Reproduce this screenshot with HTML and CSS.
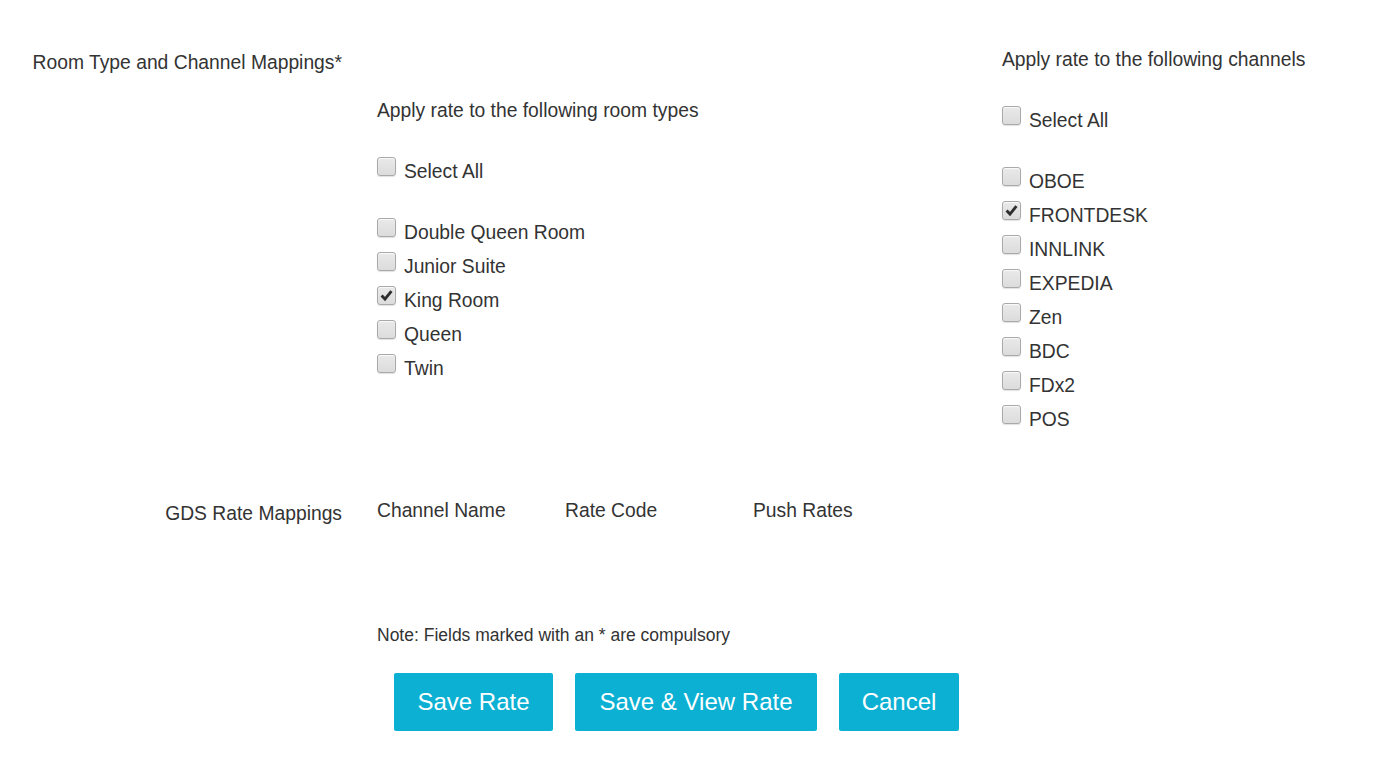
FILE: index.html
```html
<!DOCTYPE html>
<html>
<head>
<meta charset="utf-8">
<link rel="stylesheet" href="styles.css">
</head>
<body>
<div class="page">
  <div class="mapping">
    <div class="label label-top">Room Type and Channel Mappings*</div>
    <div class="col col-rooms">
      <div class="col-title">Apply rate to the following room types</div>
      <div class="check select-all"><span class="box"></span><span>Select All</span></div>
      <div class="list">
        <div class="check"><span class="box"></span><span>Double Queen Room</span></div>
        <div class="check"><span class="box"></span><span>Junior Suite</span></div>
        <div class="check"><span class="box checked"><svg viewBox="0 0 19 19"><path d="M4 9.5 L7.8 13.5 L15 4.5"/></svg></span><span>King Room</span></div>
        <div class="check"><span class="box"></span><span>Queen</span></div>
        <div class="check"><span class="box"></span><span>Twin</span></div>
      </div>
    </div>
    <div class="col col-channels">
      <div class="col-title">Apply rate to the following channels</div>
      <div class="check select-all"><span class="box"></span><span>Select All</span></div>
      <div class="list">
        <div class="check"><span class="box"></span><span>OBOE</span></div>
        <div class="check"><span class="box checked"><svg viewBox="0 0 19 19"><path d="M4 9.5 L7.8 13.5 L15 4.5"/></svg></span><span>FRONTDESK</span></div>
        <div class="check"><span class="box"></span><span>INNLINK</span></div>
        <div class="check"><span class="box"></span><span>EXPEDIA</span></div>
        <div class="check"><span class="box"></span><span>Zen</span></div>
        <div class="check"><span class="box"></span><span>BDC</span></div>
        <div class="check"><span class="box"></span><span>FDx2</span></div>
        <div class="check"><span class="box"></span><span>POS</span></div>
      </div>
    </div>
  </div>

  <div class="gds">
    <div class="label label-gds">GDS Rate Mappings</div>
    <div class="gds-head">
      <span>Channel Name</span>
      <span>Rate Code</span>
      <span>Push Rates</span>
    </div>
  </div>

  <div class="footer">
    <p class="note">Note: Fields marked with an * are compulsory</p>
    <div class="actions">
      <button class="btn btn-save">Save Rate</button>
      <button class="btn btn-view">Save &amp; View Rate</button>
      <button class="btn btn-cancel">Cancel</button>
    </div>
  </div>
</div>
</body>
</html>
```
FILE: styles.css
```css
html, body {
  margin: 0;
  padding: 0;
  background: #ffffff;
}

body {
  font-family: "Liberation Sans", Arial, sans-serif;
  font-size: 19.3px;
  line-height: 20px;
  color: #333333;
}

.page {
  padding-top: 50px;
}

.mapping {
  display: grid;
  grid-template-columns: 342px 590px 1fr;
  column-gap: 35px;
  align-items: start;
}

.label {
  text-align: right;
  white-space: nowrap;
}

.label-top {
  padding-top: 3px;
}

.col-rooms {
  padding-top: 51px;
}

.col-title {
  white-space: nowrap;
}

.select-all {
  margin-top: 41px;
}

.list {
  margin-top: 41px;
  display: flex;
  flex-direction: column;
  gap: 14px;
}

.check {
  display: flex;
  align-items: flex-start;
  gap: 8px;
  white-space: nowrap;
}

.box {
  flex: none;
  width: 17px;
  height: 17px;
  margin-top: -5px;
  border: 1px solid #a9a9a9;
  border-radius: 3px;
  background: linear-gradient(#e9e9e9, #dcdcdc);
  box-shadow: inset 0 1px 1px rgba(255, 255, 255, 0.8), 0 1px 1px rgba(0, 0, 0, 0.12);
  display: flex;
  align-items: center;
  justify-content: center;
}

.box svg {
  width: 17px;
  height: 17px;
  fill: none;
  stroke: #2e2e2e;
  stroke-width: 3.2;
  stroke-linejoin: miter;
}

.gds {
  display: grid;
  grid-template-columns: 342px 1fr;
  column-gap: 35px;
  margin-top: 71px;
}

.label-gds {
  padding-top: 3px;
}

.gds-head {
  display: grid;
  grid-template-columns: 188px 188px 188px;
}

.footer {
  margin-top: 101px;
  padding-left: 377px;
}

.note {
  margin: 0;
  font-size: 17.5px;
  line-height: 20px;
}

.actions {
  display: flex;
  gap: 22px;
  margin-top: 28px;
  padding-left: 17px;
}

.btn {
  height: 58px;
  padding: 0;
  border: none;
  border-radius: 2px;
  background: #0cb0d3;
  color: #ffffff;
  font-family: "Liberation Sans", Arial, sans-serif;
  font-size: 24px;
  text-align: center;
  cursor: pointer;
}

.btn-save {
  width: 159px;
}

.btn-view {
  width: 242px;
}

.btn-cancel {
  width: 120px;
}
```
